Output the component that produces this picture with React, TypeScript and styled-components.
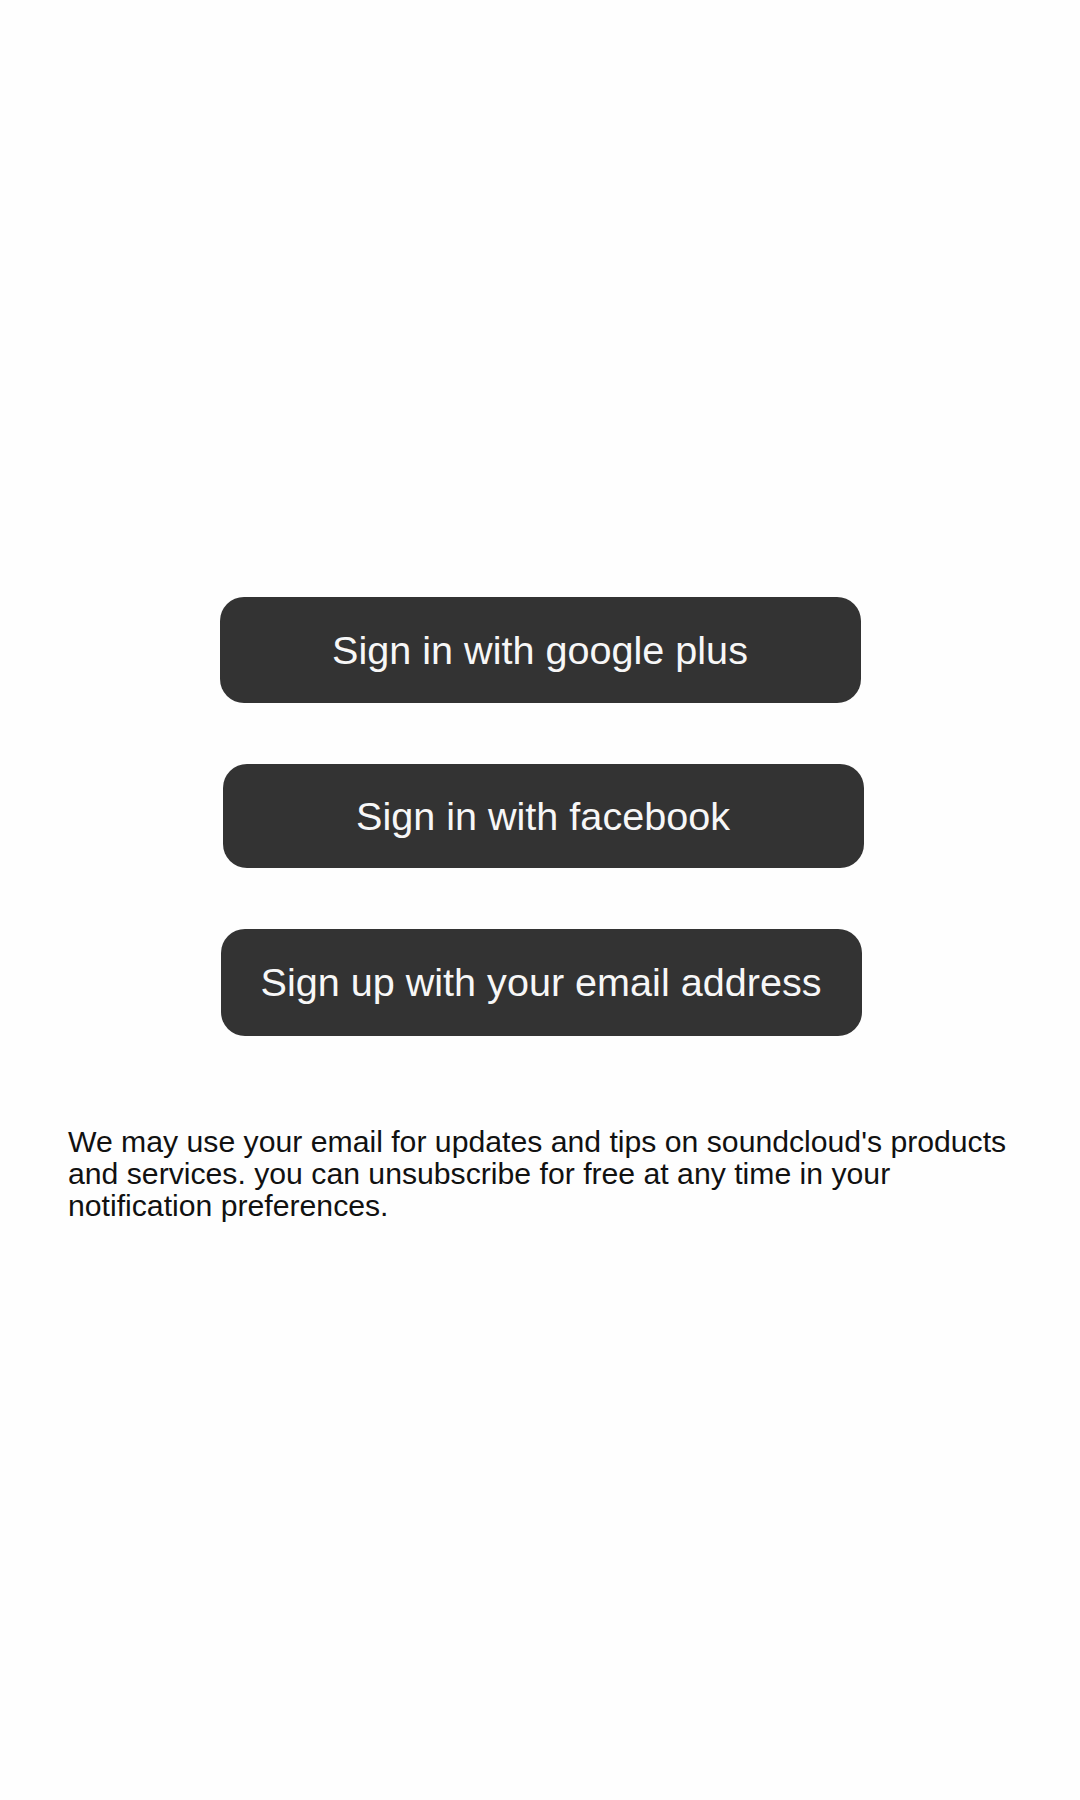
import React from "react";
import styled, { createGlobalStyle } from "styled-components";

const GlobalStyle = createGlobalStyle`
    html, body {
        margin: 0;
        padding: 0;
        background: #fefefe;
        font-family: "Liberation Sans", Arial, sans-serif;
    }
`;

const Page = styled.div`
    width: 1080px;
    min-height: 1800px;
    display: flex;
    flex-direction: column;
    align-items: center;
    padding-top: 597px;
    box-sizing: border-box;
`;

const Buttons = styled.div`
    display: flex;
    flex-direction: column;
    align-items: center;
    gap: 61px;
`;

const AuthButton = styled.button<{ $shift?: number; $h?: number }>`
    width: 641px;
    height: ${(p) => p.$h ?? 106}px;
    margin-left: ${(p) => (p.$shift ?? 0) * 2}px;
    background-color: #333333;
    border: none;
    border-radius: 24px;
    color: #f7f7f7;
    font-family: "Liberation Sans", Arial, sans-serif;
    font-size: 39.6px;
    display: flex;
    justify-content: center;
    align-items: center;
    padding: 0;
    cursor: pointer;
`;

const Notice = styled.p`
    width: 944px;
    margin: 90px 0 0 0;
    color: #111;
    font-size: 30.2px;
    line-height: 32px;
`;

const App: React.FC = () => {
    return (
        <>
            <GlobalStyle />
            <Page>
                <Buttons>
                    <AuthButton>Sign in with google plus</AuthButton>
                    <AuthButton $shift={3} $h={104}>Sign in with facebook</AuthButton>
                    <AuthButton $shift={1} $h={107}>Sign up with your email address</AuthButton>
                </Buttons>
                <Notice>
                    We may use your email for updates and tips on soundcloud's products and
                    services. you can unsubscribe for free at any time in your notification
                    preferences.
                </Notice>
            </Page>
        </>
    );
};

export default App;
